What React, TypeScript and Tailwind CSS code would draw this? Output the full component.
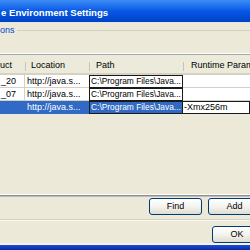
const ROWS = [
  { product: '_20', location: 'http://java.s...', path: 'C:\\Program Files\\Java...', params: '', selected: false },
  { product: '_07', location: 'http://java.s...', path: 'C:\\Program Files\\Java...', params: '', selected: false },
  { product: '', location: 'http://java.s...', path: 'C:\\Program Files\\Java...', params: '-Xmx256m', selected: true },
];

function XpButton({ label, className }: { label: string; className: string }) {
  return (
    <div
      className={`h-[17px] shrink-0 rounded-[3px] border border-[#003C74] bg-gradient-to-b from-[#FFFFFF] via-[#F4F3EE] to-[#DEDCD2] flex items-center justify-center text-black ${className}`}
    >
      {label}
    </div>
  );
}

export default function App() {
  return (
    <div
      className="w-[250px] h-[250px] overflow-hidden bg-[#ECE9D8] flex flex-col text-[9px] leading-none text-black"
      style={{ fontFamily: '"Liberation Sans", Arial, sans-serif' }}
    >
      {/* Title bar */}
      <div className="h-[22px] shrink-0 bg-gradient-to-b from-[#3C8CF4] via-[#0858E8] to-[#0042C4] flex items-center pt-[3px] whitespace-nowrap">
        <span className="text-white font-bold text-[9.6px] pl-px">e Environment Settings</span>
      </div>
      <div className="h-px shrink-0 bg-[#DCE4EE]" />

      {/* Group label */}
      <div className="h-[8px] mt-[3px] shrink-0 flex items-center">
        <span className="text-[#0046D5] pr-[2px]">ons</span>
        <div className="flex-1 h-px bg-[#D0D0BF]" />
      </div>

      <div className="h-[19px] shrink-0" />

      {/* Table */}
      <div className="h-px shrink-0 bg-white" />
      <div className="h-px shrink-0 bg-[#A5A5A5]" />
      <div className="h-[20px] shrink-0 flex bg-[#EBEADB] border-b-2 border-[#D6D2C2] whitespace-nowrap overflow-hidden">
        <div className="w-[25px] shrink-0 flex items-end pb-[3px]">uct</div>
        <div className="w-[64px] shrink-0 flex items-end pb-[3px] pl-[6px] relative">
          <div className="absolute left-0 top-[7px] bottom-[2px] w-px bg-[#C7C5B2]" />
          Location
        </div>
        <div className="w-[94px] shrink-0 flex items-end pb-[3px] pl-[7px] relative">
          <div className="absolute left-0 top-[7px] bottom-[2px] w-px bg-[#C7C5B2]" />
          Path
        </div>
        <div className="flex-1 min-w-0 flex items-end pb-[3px] pl-[8px] relative">
          <div className="absolute left-0 top-[7px] bottom-[2px] w-px bg-[#C7C5B2]" />
          Runtime Parame
        </div>
      </div>

      {ROWS.map((row, i) => (
        <div key={i} className="h-[13px] shrink-0 flex whitespace-nowrap">
          <div
            className={`w-[25px] shrink-0 flex items-center pl-px border-b border-r ${
              row.selected ? 'bg-[#316AC5] text-white border-[#316AC5]' : 'bg-white border-[#D4D0C8]'
            }`}
          >
            {row.product}
          </div>
          <div
            className={`w-[64px] shrink-0 flex items-center pl-[2px] border-b ${
              row.selected ? 'bg-[#316AC5] text-white border-[#316AC5]' : 'bg-white border-[#D4D0C8]'
            }`}
          >
            {row.location}
          </div>
          <div
            className={`w-[94px] shrink-0 flex items-center pl-px border border-[#1A1A1A] overflow-hidden text-[8.4px] ${
              row.selected ? 'bg-[#316AC5] text-white' : 'bg-white'
            }`}
          >
            {row.path}
          </div>
          <div
            className={`flex-1 flex items-center pl-[1px] bg-white ${
              row.selected ? 'border border-l-0 border-[#1A1A1A]' : 'border-b border-[#D4D0C8]'
            }`}
          >
            {row.params}
          </div>
        </div>
      ))}

      <div className="flex-1" />
      <div className="h-px shrink-0 bg-white" />
      <div className="h-px shrink-0 bg-[#8F8F8F]" />
      <div className="h-px shrink-0 bg-[#BDBDBD]" />

      {/* Find / Add */}
      <div className="h-[22px] shrink-0 flex items-start pt-px pl-[149px] gap-[6px]">
        <XpButton label="Find" className="w-[53px]" />
        <XpButton label="Add" className="w-[53px]" />
      </div>
      <div className="h-px shrink-0 bg-[#D6D2C2]" />
      <div className="h-px shrink-0 bg-[#F7F6F0]" />

      {/* OK */}
      <div className="h-[22px] shrink-0 flex items-start pt-[5px] pl-[212px]">
        <XpButton label="OK" className="w-[50px]" />
      </div>

      <div className="h-[2px] shrink-0 bg-[#F4F2EA]" />
      <div className="h-[5px] shrink-0 bg-gradient-to-b from-[#1C4FD8] to-[#0A2A9E]" />
    </div>
  );
}
